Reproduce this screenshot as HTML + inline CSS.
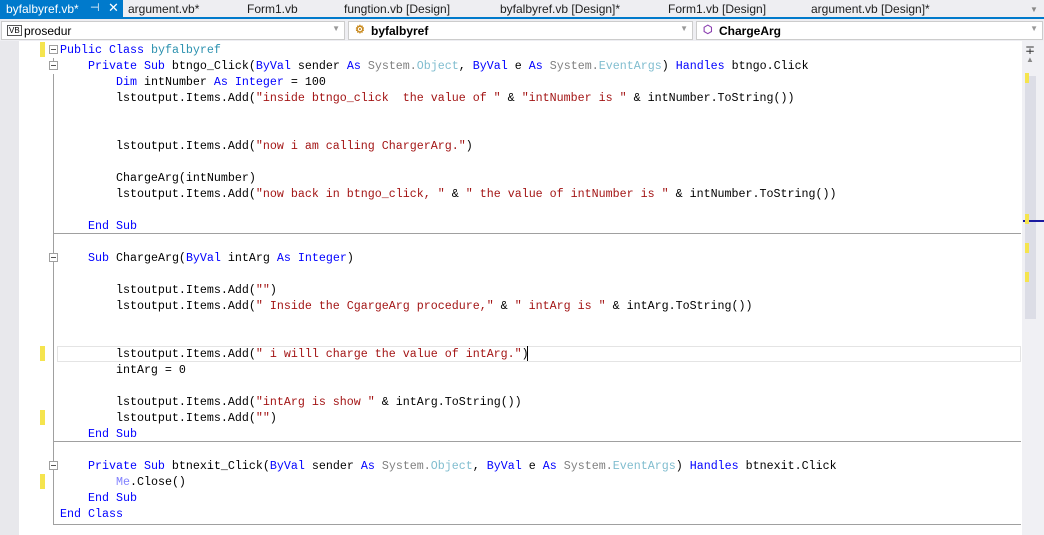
<!DOCTYPE html>
<html><head><meta charset="utf-8"><style>
*{margin:0;padding:0;box-sizing:border-box}
body{width:1044px;height:535px;overflow:hidden;background:#fff;font-family:"Liberation Sans",sans-serif;position:relative}
.tabs{position:absolute;left:0;top:0;width:1044px;height:19px;background:#eeeef2;border-bottom:2px solid #007acc;font-size:12px;color:#1e1e1e}
.tab{position:absolute;top:2px;white-space:nowrap}
.act{position:absolute;left:0;top:0;width:123px;height:19px;background:#007acc;color:#fff}
.nav{position:absolute;left:0;top:19px;width:1044px;height:22px;background:#eeeef2}
.cb{position:absolute;top:2px;height:19px;background:#fff;border:1px solid #ccc;font-size:12px;padding:2px 0 0 22px}
.cb .ar{position:absolute;right:4px;top:2px;color:#999;font-size:8px}
.gut{position:absolute;left:0;top:41px;width:19px;height:494px;background:#e8e8ec}
.code{position:absolute;left:60px;top:42px;font-family:"Liberation Mono",monospace;font-size:11.67px;line-height:16px;white-space:pre;color:#000}
.k{color:#0000ff}.s{color:#a31515}.g{color:#808080}.t{color:#2b91af;opacity:.6}.m{color:#8080ff}
.y{position:absolute;left:40px;width:5px;background:#f5e44e}
.sep{position:absolute;left:53px;width:968px;height:1px;background:#a0a0a0}
.ol{position:absolute;left:53px;width:1px;background:#a0a0a0}
.box{position:absolute;width:9px;height:9px;border:1px solid #a0a0a0;background:#fff;left:49px}
.box:after{content:"";position:absolute;left:1px;top:3px;width:5px;height:1px;background:#555}
.sb{position:absolute;left:1022px;top:41px;width:22px;height:494px;background:#f0f0f4}
</style></head><body>
<div class="tabs">
<div class="act"><span style="position:absolute;left:6px;top:2px">byfalbyref.vb*</span><span style="position:absolute;left:90px;top:1px;font-size:11px">⊣</span><span style="position:absolute;left:108px;top:0px;font-size:13px">✕</span></div>
<span class="tab" style="left:128px">argument.vb*</span>
<span class="tab" style="left:247px">Form1.vb</span>
<span class="tab" style="left:344px">fungtion.vb [Design]</span>
<span class="tab" style="left:500px">byfalbyref.vb [Design]*</span>
<span class="tab" style="left:668px">Form1.vb [Design]</span>
<span class="tab" style="left:811px">argument.vb [Design]*</span>
<span class="tab" style="left:1030px;color:#888;font-size:8px;top:5px">▼</span>
</div>
<div class="nav">
<div class="cb" style="left:1px;width:344px"><span style="position:absolute;left:5px;top:3px;font-size:8px;border:1px solid #555;line-height:9px;padding:0 1px">VB</span>prosedur<span class="ar">▼</span></div>
<div class="cb" style="left:348px;width:345px;font-weight:bold"><span style="position:absolute;left:6px;top:1px;color:#c98a1e;font-size:11px">⚙</span>byfalbyref<span class="ar">▼</span></div>
<div class="cb" style="left:696px;width:347px;font-weight:bold"><span style="position:absolute;left:6px;top:1px;color:#8a3fb0;font-size:11px">⬡</span>ChargeArg<span class="ar">▼</span></div>
</div>
<div class="gut"></div>
<div class="sb"><div style="position:absolute;left:3px;top:2px;font-size:12px;color:#333">∓</div><div style="position:absolute;left:4px;top:14px;font-size:8px;color:#888">▲</div><div style="position:absolute;left:3px;top:35px;width:11px;height:243px;background:#dcdde6"></div></div>
<div style="position:absolute;left:1023px;top:220px;width:21px;height:2px;background:#1a1aa0"></div>
<div class="y" style="left:1025px;top:73px;height:10px;width:4px"></div>
<div class="y" style="left:1025px;top:214px;height:10px;width:4px"></div>
<div class="y" style="left:1025px;top:243px;height:10px;width:4px"></div>
<div class="y" style="left:1025px;top:272px;height:10px;width:4px"></div>
<div class="y" style="top:42px;height:15px"></div>
<div class="y" style="top:346px;height:15px"></div>
<div class="y" style="top:410px;height:15px"></div>
<div class="y" style="top:474px;height:15px"></div>
<div class="ol" style="top:58px;height:3px"></div>
<div class="ol" style="top:74px;height:451px"></div>
<div style="position:absolute;left:53px;top:524px;width:968px;height:1px;background:#a0a0a0"></div>
<div class="sep" style="top:233px"></div>
<div class="sep" style="top:441px"></div>
<div class="box" style="top:45px"></div>
<div class="box" style="top:61px"></div>
<div class="box" style="top:253px"></div>
<div class="box" style="top:461px"></div>
<div style="position:absolute;left:57px;top:346px;width:964px;height:16px;border:1px solid #e4e4e4"></div>
<div style="position:absolute;left:527px;top:346px;width:1px;height:15px;background:#000"></div>
<div class="code"><span class="k">Public Class</span> <span class="t" style="opacity:1">byfalbyref</span>
    <span class="k">Private Sub</span> btngo_Click(<span class="k">ByVal</span> sender <span class="k">As</span> <span class="g">System.</span><span class="t">Object</span>, <span class="k">ByVal</span> e <span class="k">As</span> <span class="g">System.</span><span class="t">EventArgs</span>) <span class="k">Handles</span> btngo.Click
        <span class="k">Dim</span> intNumber <span class="k">As Integer</span> = 100
        lstoutput.Items.Add(<span class="s">"inside btngo_click  the value of "</span> &amp; <span class="s">"intNumber is "</span> &amp; intNumber.ToString())


        lstoutput.Items.Add(<span class="s">"now i am calling ChargerArg."</span>)

        ChargeArg(intNumber)
        lstoutput.Items.Add(<span class="s">"now back in btngo_click, "</span> &amp; <span class="s">" the value of intNumber is "</span> &amp; intNumber.ToString())

    <span class="k">End Sub</span>

    <span class="k">Sub</span> ChargeArg(<span class="k">ByVal</span> intArg <span class="k">As Integer</span>)

        lstoutput.Items.Add(<span class="s">""</span>)
        lstoutput.Items.Add(<span class="s">" Inside the CgargeArg procedure,"</span> &amp; <span class="s">" intArg is "</span> &amp; intArg.ToString())


        lstoutput.Items.Add(<span class="s">" i willl charge the value of intArg."</span>)
        intArg = 0

        lstoutput.Items.Add(<span class="s">"intArg is show "</span> &amp; intArg.ToString())
        lstoutput.Items.Add(<span class="s">""</span>)
    <span class="k">End Sub</span>

    <span class="k">Private Sub</span> btnexit_Click(<span class="k">ByVal</span> sender <span class="k">As</span> <span class="g">System.</span><span class="t">Object</span>, <span class="k">ByVal</span> e <span class="k">As</span> <span class="g">System.</span><span class="t">EventArgs</span>) <span class="k">Handles</span> btnexit.Click
        <span class="m">Me</span>.Close()
    <span class="k">End Sub</span>
<span class="k">End Class</span></div>
</body></html>
